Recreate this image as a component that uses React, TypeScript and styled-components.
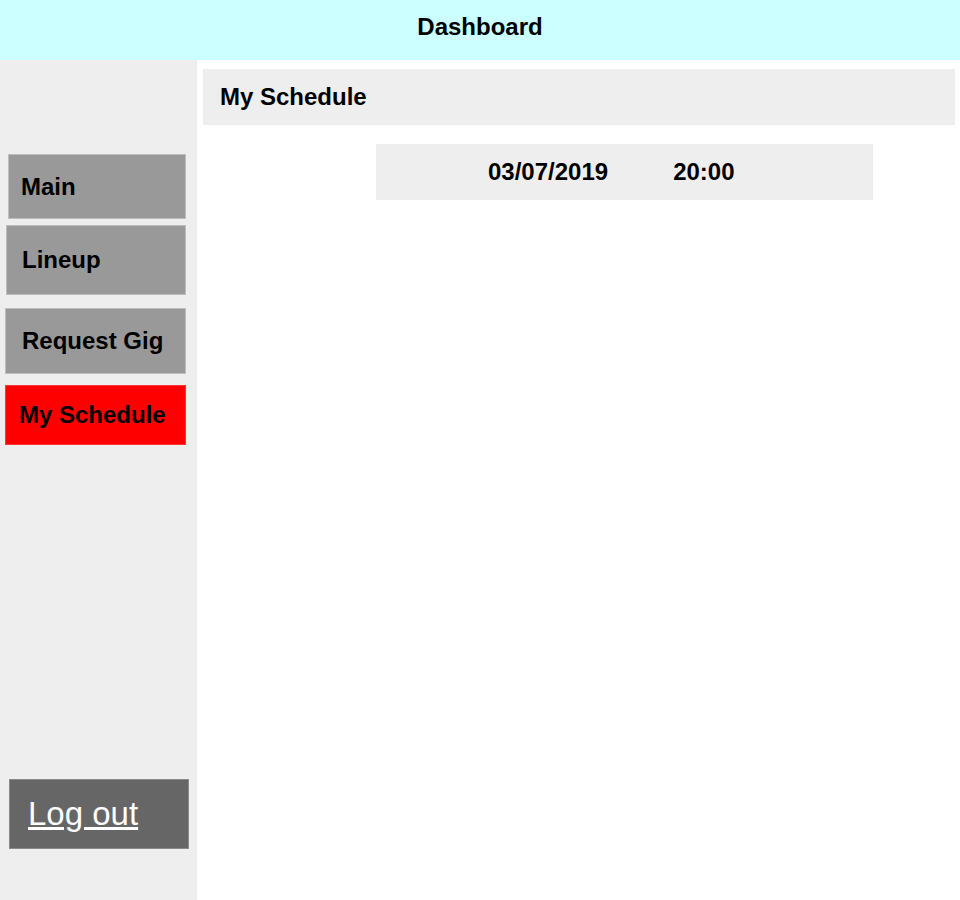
import * as React from 'react';
import styled, { createGlobalStyle } from 'styled-components';

const GlobalStyle = createGlobalStyle`
  html, body {
    margin: 0;
    padding: 0;
    background: #ffffff;
    font-family: "Liberation Sans", Arial, sans-serif;
  }
`;

type NavItem = {
  label: string;
  active?: boolean;
  left: number;
  width: number;
  height: number;
  top: number;
  pad: number;
};

const navItems: NavItem[] = [
  { label: 'Main', left: 8, width: 178, height: 65, top: 0, pad: 12 },
  { label: 'Lineup', left: 6, width: 180, height: 70, top: 6, pad: 15 },
  { label: 'Request Gig', left: 5, width: 181, height: 66, top: 13, pad: 16 },
  { label: 'My Schedule', left: 5, width: 181, height: 60, top: 11, pad: 13, active: true },
];

const schedule = [{ date: '03/07/2019', time: '20:00' }];

export default function App() {
  return (
    <>
      <GlobalStyle />
      <Page>
        <Header>Dashboard</Header>
        <Body>
          <Sidebar>
            {navItems.map(item => (
              <NavButton
                key={item.label}
                $active={item.active}
                $left={item.left}
                $width={item.width}
                $height={item.height}
                $top={item.top}
                $pad={item.pad}
              >
                {item.label}
              </NavButton>
            ))}
            <LogoutButton>
              <LogoutLink href="#">Log out</LogoutLink>
            </LogoutButton>
          </Sidebar>
          <Content>
            <TitleBar>My Schedule</TitleBar>
            {schedule.map(row => (
              <ScheduleRow key={row.date + row.time}>
                <span>{row.date}</span>
                <span>{row.time}</span>
              </ScheduleRow>
            ))}
          </Content>
        </Body>
      </Page>
    </>
  );
}

const Page = styled.div`
  display: flex;
  flex-direction: column;
  min-height: 100vh;
`;

const Header = styled.header`
  box-sizing: border-box;
  height: 60px;
  padding-top: 13px;
  background: #ccffff;
  text-align: center;
  font-size: 24px;
  font-weight: 700;
  color: #000;
`;

const Body = styled.div`
  flex: 1;
  display: flex;
`;

const Sidebar = styled.nav`
  width: 197px;
  flex-shrink: 0;
  background: #eeeeee;
  display: flex;
  flex-direction: column;
  padding: 94px 0 51px;
  box-sizing: border-box;
`;

const NavButton = styled.div<{
  $active?: boolean;
  $left: number;
  $width: number;
  $height: number;
  $top: number;
  $pad: number;
}>`
  box-sizing: border-box;
  display: flex;
  align-items: center;
  margin-left: ${p => p.$left}px;
  margin-top: ${p => p.$top}px;
  width: ${p => p.$width}px;
  height: ${p => p.$height}px;
  padding-left: ${p => p.$pad}px;
  background: ${p => (p.$active ? '#ff0000' : '#999999')};
  border: 1px solid ${p => (p.$active ? '#ff3333' : '#bdbdbd')};
  font-size: 24px;
  font-weight: 700;
  color: #000;
  white-space: nowrap;
`;

const LogoutButton = styled.div`
  box-sizing: border-box;
  margin-top: auto;
  margin-left: 9px;
  width: 180px;
  height: 70px;
  display: flex;
  align-items: center;
  padding-left: 18px;
  background: #666666;
  border: 1px solid #8a8a8a;
`;

const LogoutLink = styled.a`
  color: #ffffff;
  font-size: 33px;
  text-decoration: underline;
`;

const Content = styled.main`
  flex: 1;
  display: flex;
  flex-direction: column;
  padding: 9px 5px 0 6px;
`;

const TitleBar = styled.div`
  box-sizing: border-box;
  height: 56px;
  display: flex;
  align-items: center;
  padding-left: 17px;
  background: #eeeeee;
  font-size: 24px;
  font-weight: 700;
  color: #000;
`;

const ScheduleRow = styled.div`
  box-sizing: border-box;
  margin: 19px 0 0 173px;
  width: 497px;
  height: 56px;
  display: flex;
  align-items: center;
  gap: 65px;
  padding-left: 112px;
  background: #eeeeee;
  font-size: 24px;
  font-weight: 700;
  color: #000;
`;
